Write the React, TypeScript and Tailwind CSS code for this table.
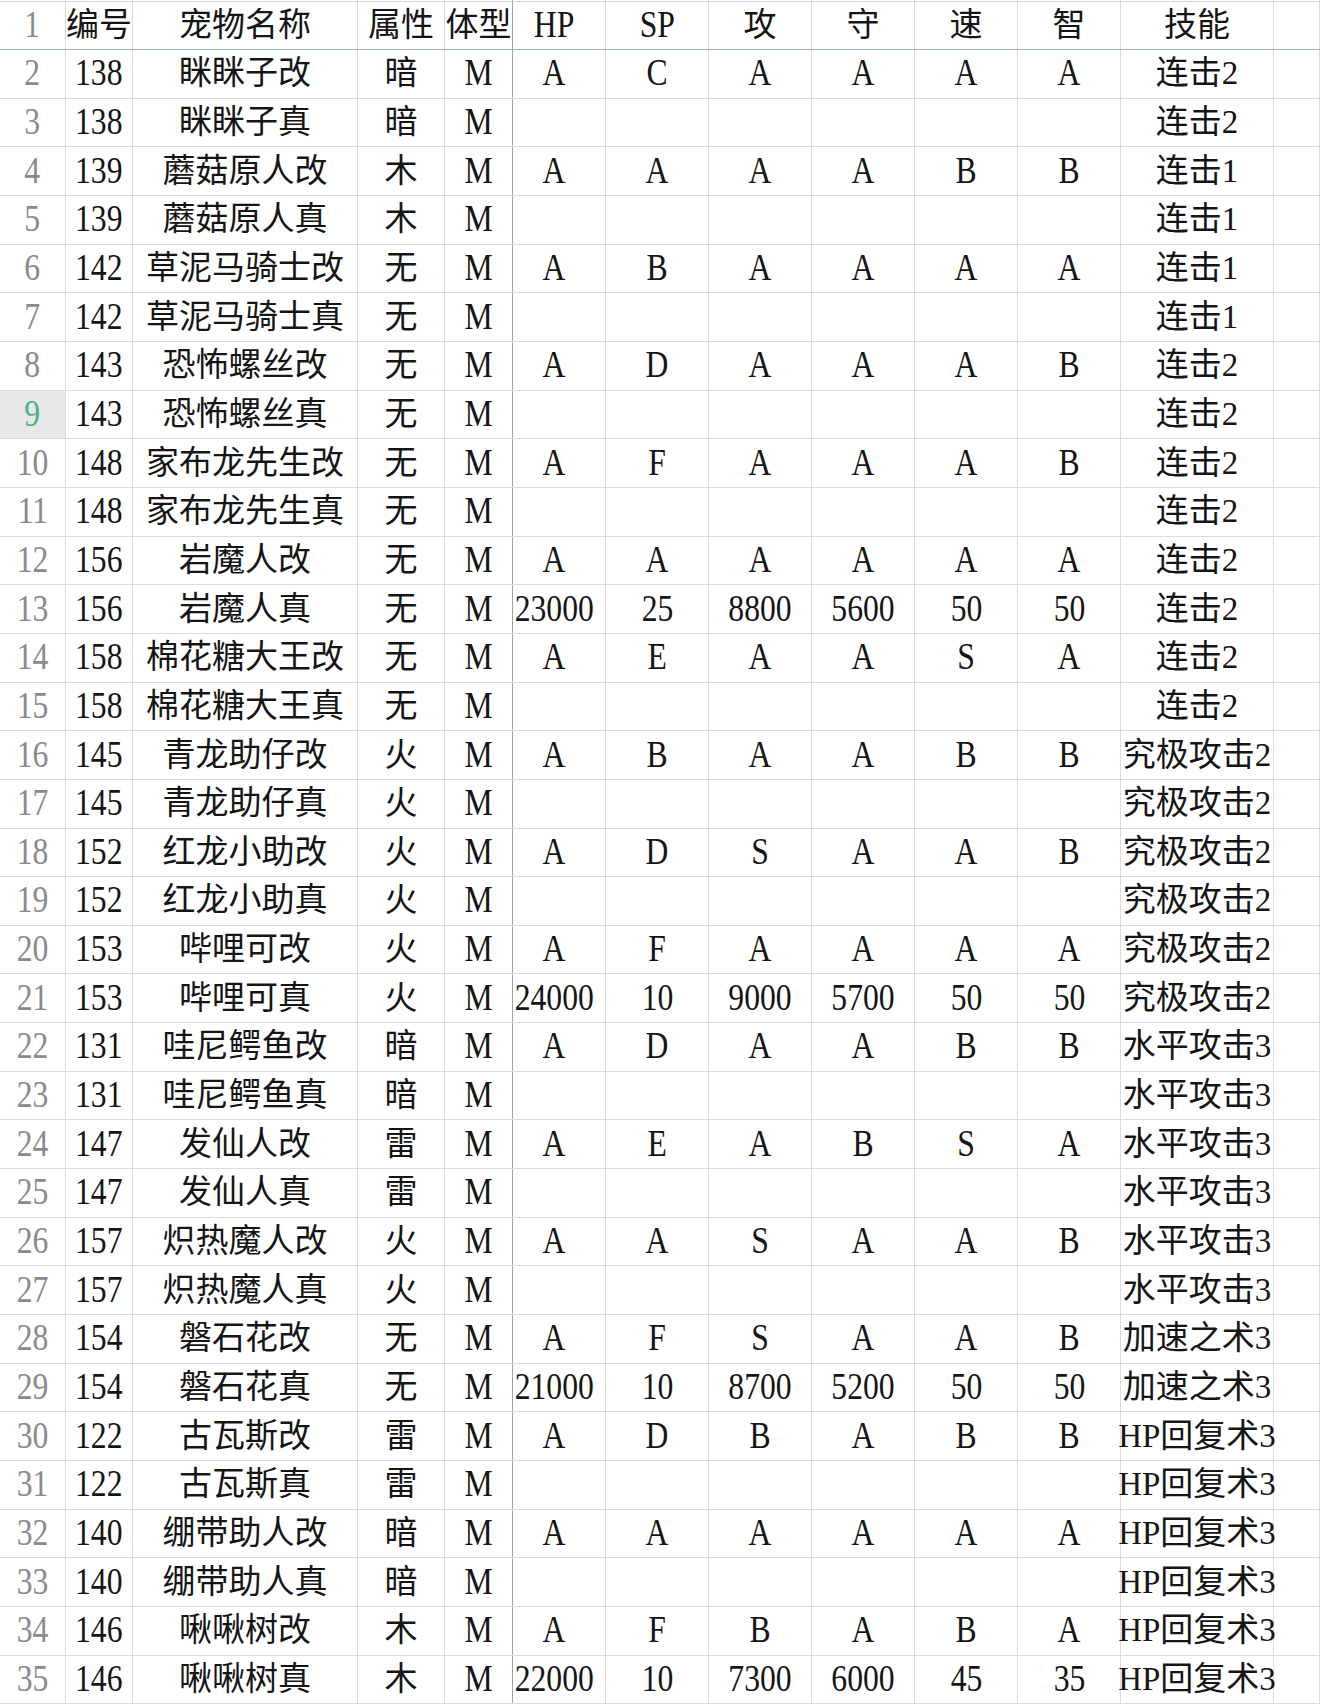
import React from "react";

type Row = [string, string, string, string, string, string, string, string, string, string, string];

const rows: Row[] = [
  ["138", "眯眯子改", "暗", "M", "A", "C", "A", "A", "A", "A", "连击2"],
  ["138", "眯眯子真", "暗", "M", "", "", "", "", "", "", "连击2"],
  ["139", "蘑菇原人改", "木", "M", "A", "A", "A", "A", "B", "B", "连击1"],
  ["139", "蘑菇原人真", "木", "M", "", "", "", "", "", "", "连击1"],
  ["142", "草泥马骑士改", "无", "M", "A", "B", "A", "A", "A", "A", "连击1"],
  ["142", "草泥马骑士真", "无", "M", "", "", "", "", "", "", "连击1"],
  ["143", "恐怖螺丝改", "无", "M", "A", "D", "A", "A", "A", "B", "连击2"],
  ["143", "恐怖螺丝真", "无", "M", "", "", "", "", "", "", "连击2"],
  ["148", "家布龙先生改", "无", "M", "A", "F", "A", "A", "A", "B", "连击2"],
  ["148", "家布龙先生真", "无", "M", "", "", "", "", "", "", "连击2"],
  ["156", "岩魔人改", "无", "M", "A", "A", "A", "A", "A", "A", "连击2"],
  ["156", "岩魔人真", "无", "M", "23000", "25", "8800", "5600", "50", "50", "连击2"],
  ["158", "棉花糖大王改", "无", "M", "A", "E", "A", "A", "S", "A", "连击2"],
  ["158", "棉花糖大王真", "无", "M", "", "", "", "", "", "", "连击2"],
  ["145", "青龙助仔改", "火", "M", "A", "B", "A", "A", "B", "B", "究极攻击2"],
  ["145", "青龙助仔真", "火", "M", "", "", "", "", "", "", "究极攻击2"],
  ["152", "红龙小助改", "火", "M", "A", "D", "S", "A", "A", "B", "究极攻击2"],
  ["152", "红龙小助真", "火", "M", "", "", "", "", "", "", "究极攻击2"],
  ["153", "哔哩可改", "火", "M", "A", "F", "A", "A", "A", "A", "究极攻击2"],
  ["153", "哔哩可真", "火", "M", "24000", "10", "9000", "5700", "50", "50", "究极攻击2"],
  ["131", "哇尼鳄鱼改", "暗", "M", "A", "D", "A", "A", "B", "B", "水平攻击3"],
  ["131", "哇尼鳄鱼真", "暗", "M", "", "", "", "", "", "", "水平攻击3"],
  ["147", "发仙人改", "雷", "M", "A", "E", "A", "B", "S", "A", "水平攻击3"],
  ["147", "发仙人真", "雷", "M", "", "", "", "", "", "", "水平攻击3"],
  ["157", "炽热魔人改", "火", "M", "A", "A", "S", "A", "A", "B", "水平攻击3"],
  ["157", "炽热魔人真", "火", "M", "", "", "", "", "", "", "水平攻击3"],
  ["154", "磐石花改", "无", "M", "A", "F", "S", "A", "A", "B", "加速之术3"],
  ["154", "磐石花真", "无", "M", "21000", "10", "8700", "5200", "50", "50", "加速之术3"],
  ["122", "古瓦斯改", "雷", "M", "A", "D", "B", "A", "B", "B", "HP回复术3"],
  ["122", "古瓦斯真", "雷", "M", "", "", "", "", "", "", "HP回复术3"],
  ["140", "绷带助人改", "暗", "M", "A", "A", "A", "A", "A", "A", "HP回复术3"],
  ["140", "绷带助人真", "暗", "M", "", "", "", "", "", "", "HP回复术3"],
  ["146", "啾啾树改", "木", "M", "A", "F", "B", "A", "B", "A", "HP回复术3"],
  ["146", "啾啾树真", "木", "M", "22000", "10", "7300", "6000", "45", "35", "HP回复术3"],
];

const header = ["编号", "宠物名称", "属性", "体型", "HP", "SP", "攻", "守", "速", "智", "技能"];

const gridCols =
  "grid grid-cols-[66px_67px_225px_87px_68px_93px_103px_103px_103px_103px_103px_153px_1fr]";

function Text({ v }: { v: string }) {
  if (/^[\x20-\x7e]+$/.test(v)) {
    return <span className="inline-block scale-y-[1.12] scale-x-[0.96]">{v}</span>;
  }
  return <span>{v}</span>;
}

function Cell({
  children,
  frozen,
  className = "",
}: {
  children?: React.ReactNode;
  frozen?: boolean;
  className?: string;
}) {
  return (
    <div
      className={
        "flex items-center justify-center whitespace-nowrap overflow-visible border-r " +
        (frozen ? "border-[#93aba3] " : "border-[#dcdcdc] ") +
        className
      }
    >
      {children}
    </div>
  );
}

function RowNum({ n, selected }: { n: number; selected?: boolean }) {
  return (
    <Cell className={selected ? "bg-[#e8e8e8] text-[#4cb08a]" : "text-[#8a8a8a]"}>
      <Text v={String(n)} />
    </Cell>
  );
}

export default function App() {
  return (
    <div
      className="w-[1320px] h-[1704px] overflow-hidden bg-white text-[#151515] text-[33px] leading-none"
      style={{ fontFamily: "'Liberation Serif', 'Noto Sans CJK SC', serif" }}
    >
      <div className={gridCols + " h-px"}>
        {Array.from({ length: 13 }).map((_, i) => (
          <Cell key={i} frozen={i === 4} />
        ))}
      </div>
      <div className={gridCols + " h-[49px] border-t border-t-[#d4d4d4] border-b border-b-[#9fb5ae]"}>
        <RowNum n={1} />
        {header.map((h, i) => (
          <Cell key={i} frozen={i === 3} className={i === 4 ? "pr-[10px]" : ""}>
            <Text v={h} />
          </Cell>
        ))}
        <Cell />
      </div>
      {rows.map((r, idx) => {
        const n = idx + 2;
        return (
          <div key={n} className={gridCols + " h-[48.66px] border-b border-[#dcdcdc]"}>
            <RowNum n={n} selected={n === 9} />
            {r.map((v, i) => (
              <Cell key={i} frozen={i === 3} className={i === 4 ? "pr-[10px]" : ""}>
                {v ? <Text v={v} /> : null}
              </Cell>
            ))}
            <Cell />
          </div>
        );
      })}
    </div>
  );
}
